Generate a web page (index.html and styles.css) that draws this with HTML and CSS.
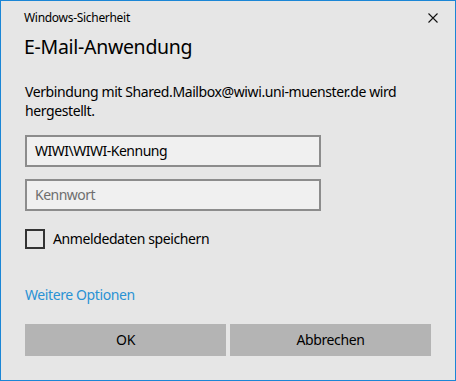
FILE: index.html
```html
<!DOCTYPE html>
<html lang="de">
<head>
<meta charset="utf-8">
<link rel="stylesheet" href="styles.css">
</head>
<body>
<div class="dialog">
  <div class="titlebar">
    <span class="title">Windows-Sicherheit</span>
    <svg class="close" width="10" height="10" viewBox="0 0 10 10"><path d="M0.5 0.5L9.5 9.5M9.5 0.5L0.5 9.5" stroke="#111" stroke-width="1.1" fill="none"/></svg>
  </div>
  <h1 class="heading">E-Mail-Anwendung</h1>
  <p class="message">Verbindung mit Shared.Mailbox@wiwi.uni-muenster.de wird hergestellt.</p>
  <div class="field">WIWI\WIWI-Kennung</div>
  <div class="field placeholder">Kennwort</div>
  <label class="check"><span class="box"></span><span>Anmeldedaten speichern</span></label>
  <a class="more">Weitere Optionen</a>
  <div class="buttons">
    <div class="btn">OK</div>
    <div class="btn">Abbrechen</div>
  </div>
</div>
</body>
</html>
```
FILE: styles.css
```css
* { box-sizing: border-box; }
html, body { margin: 0; padding: 0; }
body { font-family: "Noto Sans", "Open Sans", sans-serif; color: #000; letter-spacing: -0.4px; }
.dialog {
  width: 456px;
  height: 381px;
  border: 1px solid #1b86d6;
  background: #e6e6e6;
  padding: 0 24px 0 24px;
  display: flex;
  flex-direction: column;
}
.titlebar {
  display: flex;
  justify-content: space-between;
  align-items: center;
  height: 32px;
  margin-right: -7px;
  padding-top: 2px;
}
.title { font-size: 12px; line-height: 16px; margin-left: -1px; letter-spacing: -0.3px; }
.close { display: block; }
.heading {
  margin: 0;
  font-weight: normal;
  font-size: 19.5px;
  line-height: 28px;
  margin-left: -1px;
  letter-spacing: -0.3px;
}
.message {
  margin: 21px 0 0 0;
  font-size: 14px;
  line-height: 19px;
}
.field {
  margin-top: 15px;
  width: 296px;
  height: 32px;
  border: 2px solid #8c8c8c;
  background: #f0f0f0;
  font-size: 14px;
  line-height: 28px;
  padding: 0 8px;
  letter-spacing: -0.5px;
}
.field + .field { margin-top: 12px; }
.placeholder { color: #6e6e6e; }
.check {
  margin-top: 18px;
  display: flex;
  align-items: center;
  gap: 8px;
  font-size: 14px;
  line-height: 20px;
}
.box {
  width: 20px;
  height: 20px;
  border: 2px solid #333;
}
.more {
  margin-top: 36px;
  color: #2a92d4;
  font-size: 14px;
  line-height: 20px;
}
.buttons {
  margin-top: 19px;
  display: flex;
  gap: 4px;
}
.btn {
  width: 201px;
  height: 32px;
  background: #b4b4b4;
  font-size: 14px;
  line-height: 32px;
  text-align: center;
}
```
